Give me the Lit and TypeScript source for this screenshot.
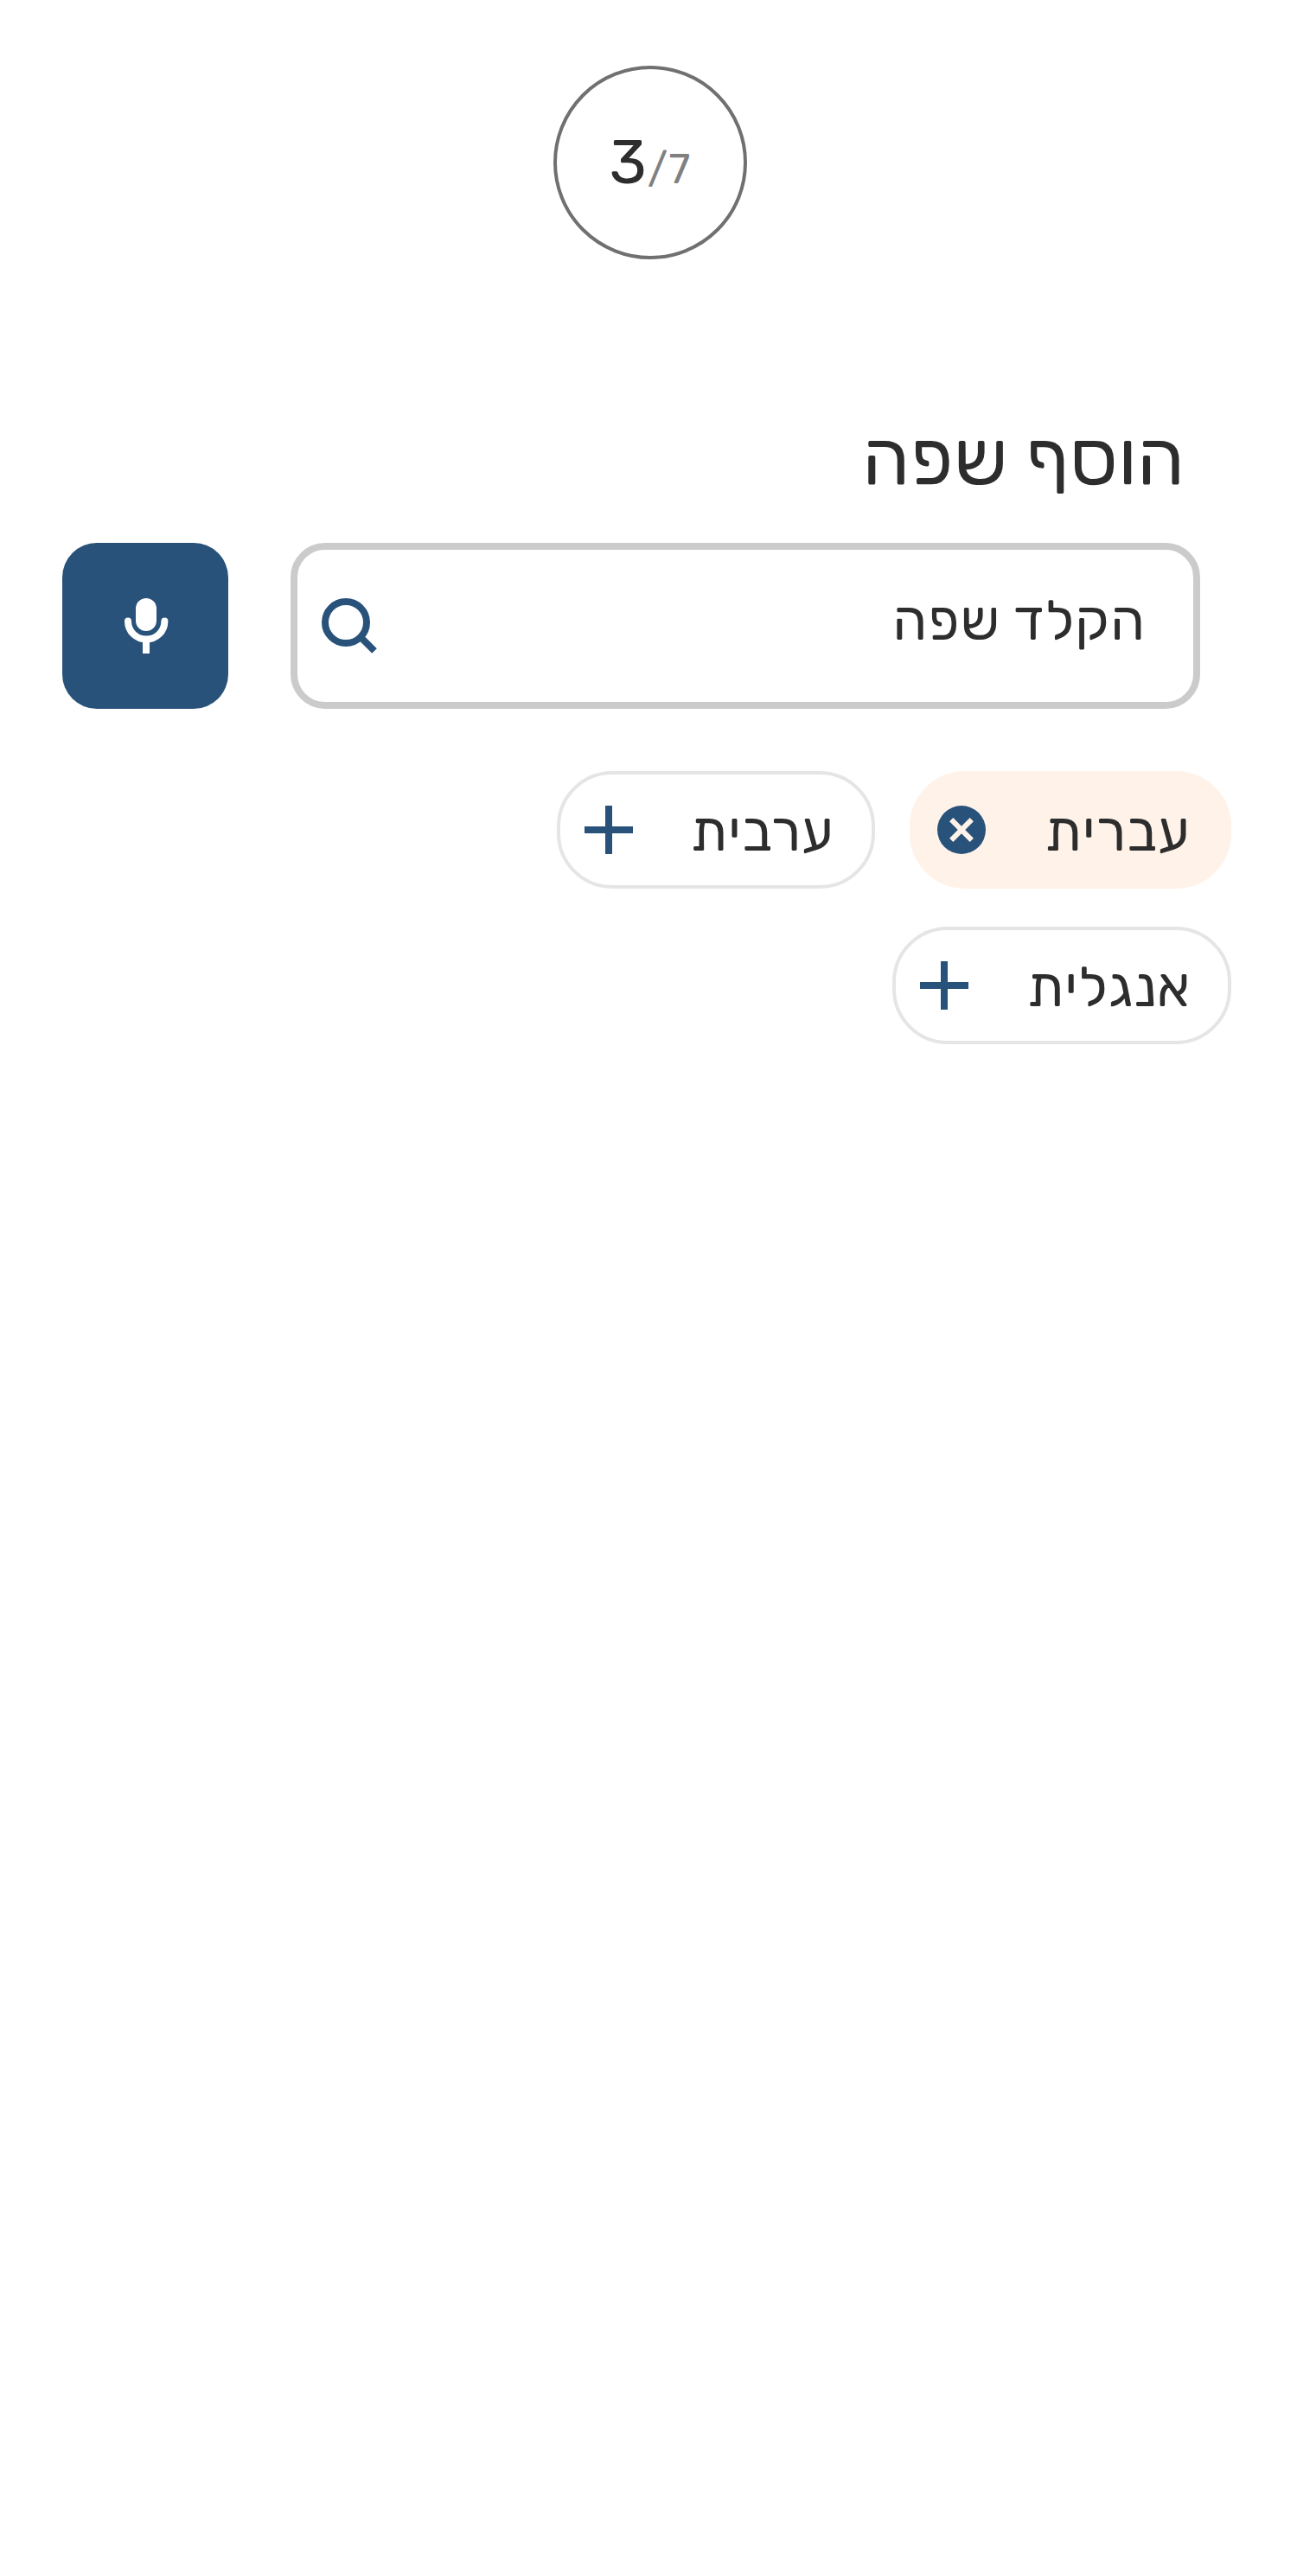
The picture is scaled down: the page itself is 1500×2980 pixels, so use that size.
import { LitElement, html, css, svg } from "lit";
import { customElement, property, state } from "lit/decorators.js";
import { styleMap } from "lit/directives/style-map.js";

interface Language {
  name: string;
  width: number;
  selected: boolean;
}

@customElement("language-chip")
export class LanguageChip extends LitElement {
  @property() label = "";
  @property({ type: Number }) width = 0;
  @property({ type: Boolean }) selected = false;

  static styles = css`
    :host { display: block; }
    .chip {
      box-sizing: border-box;
      display: flex;
      align-items: center;
      justify-content: space-between;
      height: 136px;
      padding: 0 43px 0 28px;
      border: 4px solid #e5e5e5;
      border-radius: 64px;
      background: #ffffff;
      color: #2d2d2d;
      font: inherit;
      letter-spacing: inherit;
      cursor: pointer;
    }
    .chip.selected { border-color: #fff2e8; background: #fff2e8; }
    .label { padding-top: 4px; white-space: nowrap; }
    svg { display: block; flex: none; width: 56px; height: 56px; }
  `;

  render() {
    return html`<button
      class="chip ${this.selected ? "selected" : ""}"
      style=${styleMap({ width: `${this.width}px` })}
    >
      <span class="label">${this.label}</span>
      <svg viewBox="0 0 56 56">
        ${this.selected
          ? svg`<circle cx="28" cy="28" r="28" fill="#28527a"/>
                <path d="M16.2 16.2 39.8 39.8M39.8 16.2 16.2 39.8" stroke="#fff2e8" stroke-width="6"/>`
          : svg`<path d="M0 28H56M28 0V56" stroke="#28527a" stroke-width="8"/>`}
      </svg>
    </button>`;
  }
}

@customElement("app-root")
export class AppRoot extends LitElement {
  @state() private languages: Language[] = [
    { name: "עברית", width: 372, selected: true },
    { name: "ערבית", width: 368, selected: false },
    { name: "אנגלית", width: 392, selected: false },
  ];

  static styles = css`
    :host {
      display: block;
      box-sizing: border-box;
      width: 1500px;
      height: 2980px;
      padding-top: 76px;
      background: #ffffff;
      color: #2d2d2d;
      font-family: "Rubik", "Open Sans", sans-serif;
      font-weight: 400;
    }
    .step {
      box-sizing: border-box;
      display: flex;
      align-items: center;
      justify-content: center;
      width: 224px;
      height: 224px;
      margin-left: 640px;
      border: 4px solid #707070;
      border-radius: 50%;
    }
    .count {
      display: flex;
      align-items: baseline;
      padding-bottom: 2px;
      font-size: 72px;
      letter-spacing: 1.4px;
    }
    .total { color: #808080; font-size: 48px; }
    .title {
      margin: 178px 130px 0 0;
      font-size: 88px;
      line-height: 104px;
      font-weight: 400;
      letter-spacing: 0.3px;
    }
    .search {
      display: flex;
      gap: 72px;
      margin-top: 46px;
      padding: 0 112px 0 72px;
    }
    .field {
      box-sizing: border-box;
      display: flex;
      align-items: center;
      justify-content: space-between;
      flex: 1;
      height: 192px;
      padding: 0 55px 0 28px;
      border: 8px solid #cbcbcb;
      border-radius: 40px;
      font-size: 64px;
      letter-spacing: 1px;
    }
    .field span { padding-bottom: 12px; }
    .mic {
      display: flex;
      align-items: center;
      justify-content: center;
      width: 192px;
      height: 192px;
      padding: 0;
      border: 0;
      border-radius: 40px;
      background: #28527a;
    }
    .icon { display: block; width: 64px; height: 64px; }
    .chips {
      display: flex;
      flex-wrap: wrap;
      gap: 44px 40px;
      width: 800px;
      margin: 72px 76px 0 0;
      font-size: 64px;
      letter-spacing: 1px;
    }
  `;

  render() {
    return html`
      <div class="step">
        <div class="count"><span>3</span><span class="total">/7</span></div>
      </div>
      <main dir="rtl">
        <h1 class="title">הוסף שפה</h1>
        <div class="search">
          <div class="field">
            <span>הקלד שפה</span>
            <svg class="icon" viewBox="0 0 64 64" fill="none" stroke="#28527a" stroke-width="8">
              <circle cx="28" cy="28" r="24" />
              <path d="M44 44 61 61" />
            </svg>
          </div>
          <button class="mic">
            <svg class="icon" viewBox="0 0 64 64">
              <rect x="21" y="0" width="24" height="38" rx="12" fill="#fff" />
              <path d="M12 26.5C12 38.5 21.5 47.5 33.2 47.5S54.4 38.5 54.4 26.5" fill="none" stroke="#fff" stroke-width="8" stroke-linecap="round" />
              <path d="M33 48V64" stroke="#fff" stroke-width="8" />
            </svg>
          </button>
        </div>
        <div class="chips">
          ${this.languages.map(
            (l) => html`<language-chip .label=${l.name} .width=${l.width} .selected=${l.selected}></language-chip>`
          )}
        </div>
      </main>
    `;
  }
}
